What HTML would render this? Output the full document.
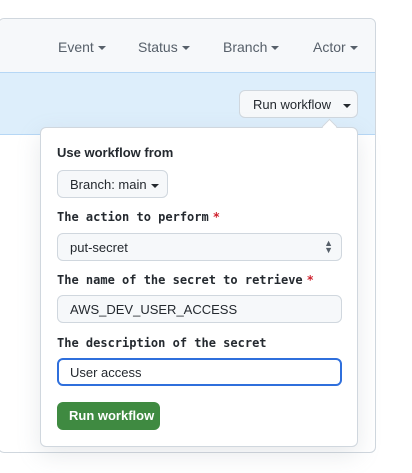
<!DOCTYPE html>
<html><head><style>
*{box-sizing:border-box;margin:0;padding:0}
body{width:412px;height:473px;background:#fff;font-family:"Liberation Sans",sans-serif;position:relative;overflow:hidden}
.outer{position:absolute;left:-2px;top:18px;width:378px;height:435px;border:1px solid #d0d7de;border-radius:6px;background:#fff}
.hdr{position:absolute;left:0;top:0;right:0;height:54px;background:#f6f8fa;border-bottom:1px solid #b6d7f5;border-radius:6px 6px 0 0}
.band{position:absolute;left:0;top:54px;right:0;height:62px;background:#ddeefb;border-bottom:1px solid #b6d7f5}
.f{position:absolute;top:20px;font-size:14px;color:#57606a}
.car{display:inline-block;width:0;height:0;border-left:4px solid transparent;border-right:4px solid transparent;border-top:4px solid #57606a;vertical-align:middle;margin-left:4px}
.btn{position:absolute;background:#f6f8fa;border:1px solid #d0d7de;border-radius:6px;font-size:13px;color:#24292f}
.pop{position:absolute;left:40px;top:127px;width:318px;height:320px;background:#fff;border:1px solid #d0d7de;border-radius:6px;box-shadow:0 8px 24px rgba(140,149,159,.2)}
.arr{position:absolute;left:324px;top:121px;width:11px;height:11px;background:#fff;border-left:1px solid #d0d7de;border-top:1px solid #d0d7de;transform:rotate(45deg)}
.lbl{position:absolute;left:16px;font-family:"DejaVu Sans Mono","Liberation Mono",monospace;font-weight:bold;font-size:12px;color:#24292f}
.lbl b{color:#cf222e;margin-left:4px}
.inp{position:absolute;left:16px;width:285px;height:28px;background:#f6f8fa;border:1px solid #d0d7de;border-radius:6px;font-size:13px;color:#24292f;padding:6px 12px}
</style></head><body>
<div class="outer">
<div class="hdr">
<span class="f" style="left:59px">Event<span class="car"></span></span>
<span class="f" style="left:139px">Status<span class="car"></span></span>
<span class="f" style="left:224px">Branch<span class="car"></span></span>
<span class="f" style="left:314px">Actor<span class="car"></span></span>
</div>
<div class="band"></div>
</div>
<div class="btn" style="left:239px;top:90px;width:119px;height:28px;padding:6px 0 0 13px">Run workflow <span class="car" style="margin-left:8px;border-top-color:#24292f"></span></div>
<div class="pop">
<div style="position:absolute;left:16px;top:17px;font-size:13px;font-weight:bold;color:#24292f">Use workflow from</div>
<div class="btn" style="left:16px;top:42px;width:111px;height:28px;padding:6px 0 0 12px">Branch: main<span class="car" style="border-top-color:#24292f"></span></div>
<div class="lbl" style="top:82px">The action to perform<b>*</b></div>
<div class="inp" style="top:105px">put-secret<span style="position:absolute;right:8px;top:6px;font-size:9px;line-height:7px;color:#57606a">▲<br>▼</span></div>
<div class="lbl" style="top:145px">The name of the secret to retrieve<b>*</b></div>
<div class="inp" style="top:167px">AWS_DEV_USER_ACCESS</div>
<div class="lbl" style="top:208px">The description of the secret</div>
<div class="inp" style="top:230px;background:#fff;border:2px solid #2f6fdc;padding:5px 11px">User access</div>
<div style="position:absolute;left:16px;top:274px;width:103px;height:28px;background:#3f8a41;border-radius:6px;color:#fff;font-size:13px;font-weight:bold;padding:6px 0 0 12px">Run workflow</div>
</div>
<div class="arr"></div>
</body></html>
